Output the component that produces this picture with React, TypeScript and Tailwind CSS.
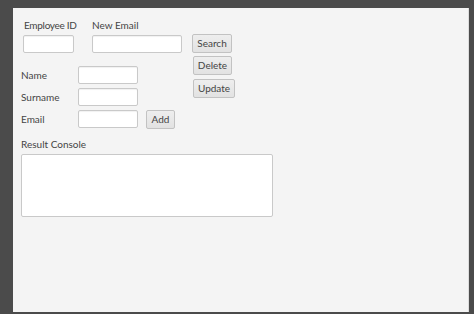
import React from 'react';

const font = { fontFamily: 'Lato, "Open Sans", sans-serif' };

function Field({ w }: { w: string }) {
  return (
    <input
      className={`${w} h-[18px] bg-white border border-[#c9c9c9] rounded-[2px] shadow-[inset_0_1px_1px_rgba(0,0,0,0.06)] outline-none`}
    />
  );
}

function Btn({ label, w }: { label: string; w: string }) {
  return (
    <button
      className={`${w} h-[19px] flex items-center justify-center text-[10px] text-[#444] bg-gradient-to-b from-[#eeeeee] to-[#e2e2e2] border border-[#c2c2c2] rounded-[2px]`}
    >
      {label}
    </button>
  );
}

function Row({ label, extra }: { label: string; extra?: React.ReactNode }) {
  return (
    <div className="flex items-center h-[18px]">
      <span className="w-[57px] text-[10px] text-[#444]">{label}</span>
      <Field w="w-[60px]" />
      {extra}
    </div>
  );
}

export default function App() {
  return (
    <div className="w-[474px] h-[314px] bg-[#4b4b4b] pt-[8px] pl-[13px]" style={font}>
      <div className="w-[456px] h-[304px] bg-[#f4f4f4] border-r border-[#dcdcdc] pt-[10px] pl-[8px]">
        <div className="flex items-start">
          <div className="flex flex-col">
            <div className="flex ml-[2px] gap-[18px]">
              <div className="flex flex-col gap-[3px] w-[51px]">
                <span className="h-[14px] leading-[14px] text-[10px] tracking-[-0.3px] whitespace-nowrap text-[#444] pl-[1px]">Employee ID</span>
                <Field w="w-[51px]" />
              </div>
              <div className="flex flex-col gap-[3px] w-[90px]">
                <span className="h-[14px] leading-[14px] text-[10px] whitespace-nowrap text-[#444]">New Email</span>
                <Field w="w-[90px]" />
              </div>
            </div>
            <div className="flex flex-col gap-[4px] mt-[13px]">
              <Row label="Name" />
              <Row label="Surname" />
              <Row
                label="Email"
                extra={
                  <div className="ml-[8px]">
                    <Btn label="Add" w="w-[29px]" />
                  </div>
                }
              />
            </div>
          </div>
          <div className="flex flex-col items-start gap-[3px] mt-[16px] ml-[10px]">
            <Btn label="Search" w="w-[40px]" />
            <div className="ml-[1px] flex flex-col items-start gap-[4px]">
              <Btn label="Delete" w="w-[39px]" />
              <Btn label="Update" w="w-[42px]" />
            </div>
          </div>
        </div>
        <div className="mt-[9px] h-[14px] leading-[14px] text-[10px] text-[#444]">Result Console</div>
        <textarea className="mt-[3px] block w-[252px] h-[63px] bg-white border border-[#c9c9c9] rounded-[2px] resize-none outline-none" />
      </div>
    </div>
  );
}
